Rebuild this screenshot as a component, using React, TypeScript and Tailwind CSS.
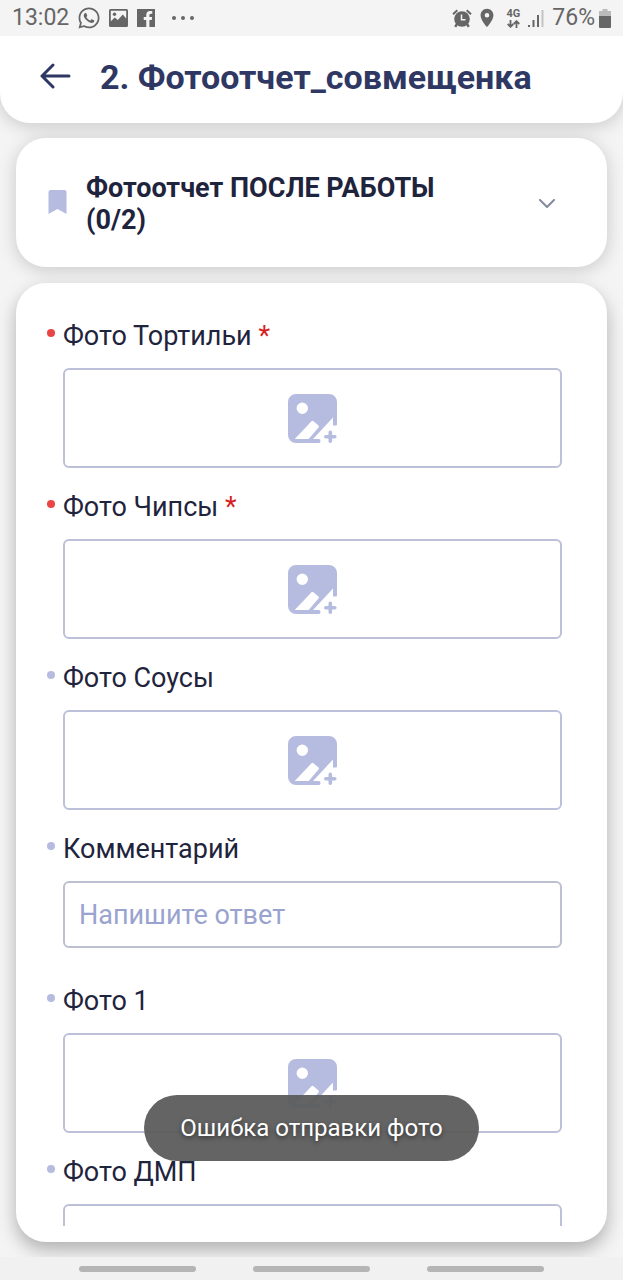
import { useState } from "react";
import { FaFacebookF, FaWhatsapp } from "react-icons/fa";
import { MdPlace } from "react-icons/md";

type Field = {
  id: string;
  label: string;
  type: "photo" | "text";
  required?: boolean;
};

const fields: Field[] = [
  { id: "tortilla", label: "Фото Тортильи", type: "photo", required: true },
  { id: "chips", label: "Фото Чипсы", type: "photo", required: true },
  { id: "sauces", label: "Фото Соусы", type: "photo" },
  { id: "comment", label: "Комментарий", type: "text" },
  { id: "photo1", label: "Фото 1", type: "photo" },
  { id: "dmp", label: "Фото ДМП", type: "photo" },
];

const PictureIcon = () => (
  <svg className="w-[19px] h-[18px]" viewBox="0 0 19 18" fill="currentColor">
    <path fillRule="evenodd" d="M1.5 0h16A1.5 1.5 0 0 1 19 1.500v15a1.500 1.500 0 0 1-1.500 1.500h-16A1.500 1.500 0 0 1 0 16.500v-15A1.500 1.500 0 0 1 1.500 0ZM1.800 1.800v10.400l4-3.700 3 2.600 5-5.600 3.400 4V1.800Z" />
    <circle cx="5.500" cy="5.300" r="1.700" />
  </svg>
);

const AlarmIcon = () => (
  <svg className="w-5 h-[19px]" viewBox="0 0 20 19" fill="none" stroke="currentColor">
    <circle cx="10" cy="10" r="7.800" fill="currentColor" stroke="none" />
    <path d="M1 5.200 5.300 1.300M19 5.200l-4.300-3.900" strokeWidth="2" />
    <path d="m5 15-1.800 2.800M15 15l1.800 2.800" strokeWidth="2.400" />
    <path d="M9.500 5.500v5.300h4" stroke="#f4f4f4" strokeWidth="1.500" />
  </svg>
);

const DataArrowsIcon = () => (
  <svg className="w-[13px] h-2" viewBox="0 0 13 8" fill="none" stroke="currentColor" strokeWidth="1.800">
    <path d="M3.500 0v6.500M.7 4l2.800 2.800L6.300 4M9.500 8V1.500M6.700 4l2.800-2.800L12.300 4" />
  </svg>
);

const SignalIcon = () => (
  <svg className="w-4 h-[17px]" viewBox="0 0 16 17" fill="currentColor">
    <path d="M0 15h2v2H0zM4.500 10h2v7h-2zM9 5h2v12H9z" />
    <path d="M13.500 0h2v17h-2z" opacity=".35" />
  </svg>
);

const BatteryIcon = () => (
  <svg className="w-3 h-[19px]" viewBox="0 0 12 19" fill="currentColor">
    <path d="M3.500 0h5v2H12v5H0V2h3.500z" opacity=".4" />
    <path d="M0 7h12v11a1 1 0 0 1-1 1H1a1 1 0 0 1-1-1z" />
  </svg>
);

const AddPhotoIcon = () => (
  <svg className="w-[49px] h-[49px]" viewBox="0 0 49 49" fill="currentColor" overflow="visible">
    <path
      fillRule="evenodd"
      d="M8 0h33a8 8 0 0 1 8 8v22.500a1 1 0 0 1-1 1h-3V23.500L25 45h6a1.500 2 0 0 1 0 4H8a8 8 0 0 1-8-8V8a8 8 0 0 1 8-8ZM14.300 8.600a5.700 5.700 0 1 0 0 11.400 5.700 5.700 0 0 0 0-11.400ZM6.700 45h14L30.500 33.500a1.500 1.500 0 0 0 0-2l-5-4.300a1.500 1.500 0 0 0-2 0Z"
    />
    <path d="M42.300 38.300v9M37.800 42.800h9" stroke="currentColor" strokeWidth="3.600" strokeLinecap="round" />
  </svg>
);

const StatusBar = () => (
  <div className="flex h-9 shrink-0 items-center justify-between px-3 text-[#666]">
    <div className="flex items-center gap-[9px]">
      <span className="text-[23px]">13:02</span>
      <FaWhatsapp className="h-[24px] w-[22px]" />
      <PictureIcon />
      <span className="flex h-[18px] w-[18px] items-end justify-end bg-[#666] pr-[2px] text-[#f4f4f4]">
        <FaFacebookF className="h-4 w-[10px]" />
      </span>
      <span className="ml-2 flex gap-[5px]">
        <i className="h-1 w-1 rounded-full bg-[#666]" />
        <i className="h-1 w-1 rounded-full bg-[#666]" />
        <i className="h-1 w-1 rounded-full bg-[#666]" />
      </span>
    </div>
    <div className="flex items-center">
      <AlarmIcon />
      <MdPlace className="ml-1 h-[22px] w-[22px]" />
      <span className="ml-2 flex flex-col items-center">
        <span className="text-[11px] leading-3 font-bold">4G</span>
        <DataArrowsIcon />
      </span>
      <span className="ml-2">
        <SignalIcon />
      </span>
      <span className="ml-2 mr-1 text-[23px]">76%</span>
      <BatteryIcon />
    </div>
  </div>
);

const FieldRow = ({ field }: { field: Field }) => {
  const [value, setValue] = useState("");

  return (
    <li className={field.type === "text" ? "shrink-0 pb-[37px]" : "shrink-0 pb-[23px]"}>
      <div className="flex items-center">
        <span
          className={
            field.required
              ? "mb-[6px] mr-2 h-2 w-2 rounded-full bg-[#e94545]"
              : "mb-[6px] mr-2 h-2 w-2 rounded-full bg-[#b5bcdf]"
          }
        />
        <label htmlFor={field.id} className="text-[27px] leading-8 text-[#1f243d]">
          {field.label}
          {field.required && <span className="text-[#d61f1f]"> *</span>}
        </label>
      </div>
      <div className="ml-4 mt-4">
        {field.type === "photo" ? (
          <button
            id={field.id}
            className="flex h-[100px] w-full items-center justify-center rounded-md border-2 border-[#bcc0d8] text-[#b6bce0]"
          >
            <AddPhotoIcon />
          </button>
        ) : (
          <input
            id={field.id}
            value={value}
            onChange={(e) => setValue(e.target.value)}
            placeholder="Напишите ответ"
            className="block h-[67px] w-full rounded-md border-2 border-[#bcc0d0] px-[14px] text-[27px] text-[#1f243d] placeholder:text-[#9aa2cf]"
          />
        )}
      </div>
    </li>
  );
};

const App = () => {
  return (
    <div className="relative flex h-screen flex-col overflow-hidden bg-[#f4f4f4] font-[Roboto,sans-serif]">
      <StatusBar />

      <div className="flex min-h-0 flex-1 flex-col overflow-hidden">
        <header className="flex h-[87px] shrink-0 items-center rounded-b-[30px] bg-white pb-1 pl-10 pr-6 text-[#2f3763] shadow-[0_3px_18px_rgba(0,0,0,0.18)]">
          <button aria-label="Назад" className="mb-1 mr-[29px]">
            <svg className="h-[26px] w-[31px]" viewBox="0 0 31 26" fill="none" stroke="currentColor" strokeWidth="3" strokeLinecap="round" strokeLinejoin="round">
              <path d="M29 13H2M13 2 2 13l11 11" />
            </svg>
          </button>
          <h1 className="text-[34px] font-bold">2. Фотоотчет_совмещенка</h1>
        </header>

        <main className="flex min-h-0 flex-1 flex-col gap-4 px-4 pb-[15px] pt-[15px]">
          <button className="flex shrink-0 items-center rounded-[30px] bg-white pb-[31px] pl-8 pr-[51px] pt-[34px] text-left shadow-[0_3px_18px_rgba(0,0,0,0.18)]">
            <svg className="mb-1 h-6 w-5 shrink-0 text-[#b6bce0]" viewBox="0 0 20 24" fill="currentColor">
              <path d="M2.500 0h14a2 2 0 0 1 2 2v22l-9-5-9 5V2a2 2 0 0 1 2-2Z" />
            </svg>
            <span className="ml-[18px] flex-1 pr-[60px] text-[27px] leading-8 font-bold text-[#1f243d]">
              Фотоотчет ПОСЛЕ РАБОТЫ (0/2)
            </span>
            <svg className="h-[10px] w-[18px] shrink-0" viewBox="0 0 18 10" fill="none" stroke="#858aa0" strokeWidth="2" strokeLinecap="round" strokeLinejoin="round">
              <path d="m2 1 7 7 7-7" />
            </svg>
          </button>

          <section className="min-h-0 flex-1 rounded-[30px] bg-white pb-4 pl-[31px] pr-[45px] pt-[37px] shadow-[0_8px_18px_rgba(0,0,0,0.28)]">
            <ul className="flex h-full flex-col overflow-hidden">
              {fields.map((field) => (
                <FieldRow key={field.id} field={field} />
              ))}
            </ul>
          </section>
        </main>
      </div>

      <nav className="flex h-[23px] shrink-0 items-center justify-between bg-[#f1f1f1] px-[79px]">
        <button aria-label="Недавние" className="h-[6px] w-[117px] rounded-full bg-[#b5b5b5]" />
        <button aria-label="Домой" className="h-[6px] w-[117px] rounded-full bg-[#b5b5b5]" />
        <button aria-label="Вернуться" className="h-[6px] w-[117px] rounded-full bg-[#b5b5b5]" />
      </nav>

      <div className="pointer-events-none absolute inset-x-0 bottom-[119px] flex justify-center">
        <div
          role="status"
          className="rounded-full bg-[#5c5c5c]/95 px-9 py-[17px] text-2xl leading-8 text-white [text-shadow:0_2px_4px_rgba(0,0,0,0.5)]"
        >
          Ошибка отправки фото
        </div>
      </div>
    </div>
  );
};

export default App;
